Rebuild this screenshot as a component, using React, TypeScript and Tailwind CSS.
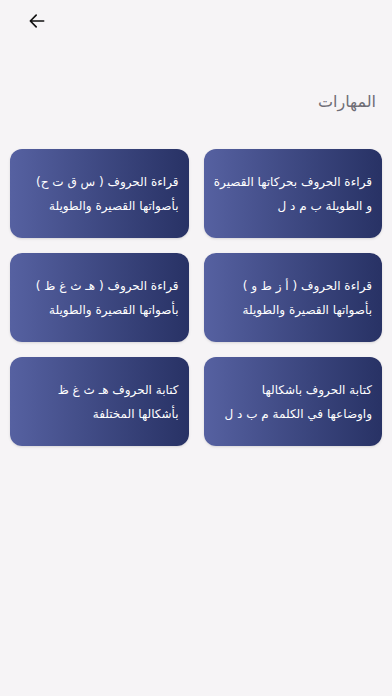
import React from 'react';

const skills = [
  ['قراءة الحروف بحركاتها القصيرة', 'و الطويلة ب م د ل'],
  ['قراءة الحروف ( س ق ت ح)', 'بأصواتها القصيرة والطويلة'],
  ['قراءة الحروف ( أ ز ط و )', 'بأصواتها القصيرة والطويلة'],
  ['قراءة الحروف ( هـ ث غ ظ )', 'بأصواتها القصيرة والطويلة'],
  ['كتابة الحروف باشكالها', 'واوضاعها في الكلمة م ب د ل'],
  ['كتابة الحروف هـ ث غ ظ', 'بأشكالها المختلفة'],
];

const App: React.FC = () => {
  return (
    <div className="min-h-[696px] w-full bg-[#f6f4f6] font-['DejaVu_Sans',sans-serif]">
      {/* Top bar */}
      <div className="h-[42px] flex items-center pl-[27px]">
        <svg className="h-[20px] w-[20px] text-[#111]" viewBox="0 0 24 24" fill="none" stroke="currentColor" strokeWidth={2} strokeLinecap="round" strokeLinejoin="round">
          <path d="M20 12H4M11 5l-7 7 7 7" />
        </svg>
      </div>

      {/* Title */}
      <div dir="rtl" className="pt-[46px] pr-[16px] text-[16px] text-[#6f6d75] leading-[28px]">
        المهارات
      </div>

      {/* Skill cards */}
      <div dir="rtl" className="grid grid-cols-2 gap-x-[15px] gap-y-[15px] px-[10px] mt-[33px]">
        {skills.map((s, i) => (
          <div
            key={i}
            className="h-[89px] rounded-[12px] bg-linear-to-l from-[#283265] to-[#5661a1] flex flex-col justify-center pr-[10px] text-white text-[12px] leading-[24px] shadow-sm"
          >
            <p>{s[0]}</p>
            <p>{s[1]}</p>
          </div>
        ))}
      </div>
    </div>
  );
};

export default App;
